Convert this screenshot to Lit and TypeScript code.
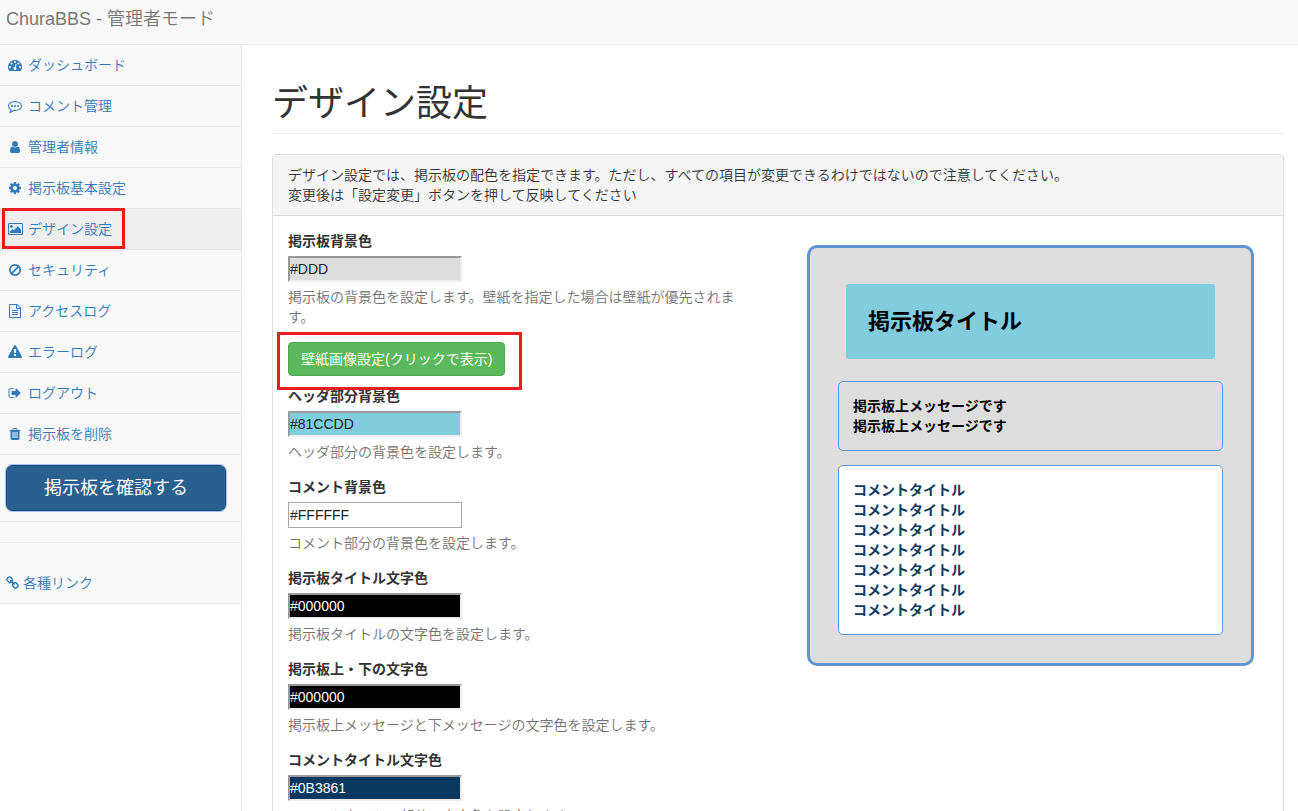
import { LitElement, html, css, svg } from "lit";
import { customElement, property, state } from "lit/decorators.js";
import { classMap } from "lit/directives/class-map.js";
import { styleMap } from "lit/directives/style-map.js";

const ICONS: Record<string, { box: string; path: string }> = {
  dashboard: {
    box: "0 0 1792 1792",
    path: "M384 1152q0-53-37.5-90.5t-90.5-37.5-90.5 37.5-37.5 90.5 37.5 90.5 90.5 37.5 90.5-37.5 37.5-90.5zm192-448q0-53-37.5-90.5t-90.5-37.5-90.5 37.5-37.5 90.5 37.5 90.5 90.5 37.5 90.5-37.5 37.5-90.5zm428 481l101-382q6-26-7.5-48.5t-38.5-29.5-48 6.5-30 39.5l-101 382q-60 5-107 43.5t-63 98.5q-20 77 20 146t117 89 146-20 89-117q16-60-6-117t-72-91zm660-33q0-53-37.5-90.5t-90.5-37.5-90.5 37.5-37.5 90.5 37.5 90.5 90.5 37.5 90.5-37.5 37.5-90.5zm-640-640q0-53-37.5-90.5t-90.5-37.5-90.5 37.5-37.5 90.5 37.5 90.5 90.5 37.5 90.5-37.5 37.5-90.5zm448 192q0-53-37.5-90.5t-90.5-37.5-90.5 37.5-37.5 90.5 37.5 90.5 90.5 37.5 90.5-37.5 37.5-90.5zm320 448q0 261-141 483-19 29-54 29h-1402q-35 0-54-29-141-221-141-483 0-182 71-348t191-286 286-191 348-71 348 71 286 191 191 286 71 348z",
  },
  comment: {
    box: "0 0 1792 1792",
    path: "M640 896q0 53-37.5 90.5t-90.5 37.5-90.5-37.5-37.5-90.5 37.5-90.5 90.5-37.5 90.5 37.5 37.5 90.5zm384 0q0 53-37.5 90.5t-90.5 37.5-90.5-37.5-37.5-90.5 37.5-90.5 90.5-37.5 90.5 37.5 37.5 90.5zm384 0q0 53-37.5 90.5t-90.5 37.5-90.5-37.5-37.5-90.5 37.5-90.5 90.5-37.5 90.5 37.5 37.5 90.5zm-512-512q-204 0-381.5 69.5t-282 187.5-104.5 255q0 112 71.5 213.5t201.5 175.5l87 50-27 96q-24 91-70 172 152-63 275-171l43-38 57 6q69 8 130 8 204 0 381.5-69.5t282-187.5 104.5-255-104.5-255-282-187.5-381.5-69.5zm896 512q0 174-120 321.5t-326 233-450 85.5q-70 0-145-8-198 175-460 242-49 14-114 22h-5q-15 0-27-10.5t-16-27.5v-1q-3-4-.5-12t2-10 4.5-9.5l6-9 7-8.5 8-9q7-8 31-34.5t34.5-38 31-39.5 32.5-51 27-59 26-76q-157-89-247.5-220t-90.5-281q0-174 120-321.5t326-233 450-85.5 450 85.5 326 233 120 321.5z",
  },
  user: {
    box: "0 0 1792 1792",
    path: "M1536 1399q0 109-62.5 187t-150.5 78h-854q-88 0-150.5-78t-62.5-187q0-85 8.5-160.5t31.5-152 58.5-131 94-89 134.5-34.5q131 128 313 128t313-128q76 0 134.5 34.5t94 89 58.5 131 31.5 152 8.5 160.5zm-256-887q0 159-112.5 271.5t-271.5 112.5-271.5-112.5-112.5-271.5 112.5-271.5 271.5-112.5 271.5 112.5 112.5 271.5z",
  },
  cog: {
    box: "0 0 1792 1792",
    path: "M1152 896q0-106-75-181t-181-75-181 75-75 181 75 181 181 75 181-75 75-181zm512-109v222q0 12-8 23t-20 13l-185 28q-19 54-39 91 35 50 107 138 10 12 10 25t-9 23q-27 37-99 108t-94 71q-12 0-26-9l-138-108q-44 23-91 38-16 136-29 186-7 28-36 28h-222q-14 0-24.5-8.5t-11.5-21.5l-28-184q-49-16-90-37l-141 107q-10 9-25 9-14 0-25-11-126-114-165-168-7-10-7-23 0-12 8-23 15-21 51-66.5t54-70.5q-27-50-41-99l-183-27q-13-2-21-12.5t-8-23.5v-222q0-12 8-23t19-13l186-28q14-46 39-92-40-57-107-138-10-12-10-24 0-10 9-23 26-36 98.5-107.5t94.5-71.5q13 0 26 10l138 107q44-23 91-38 16-136 29-186 7-28 36-28h222q14 0 24.5 8.5t11.5 21.5l28 184q49 16 90 37l142-107q9-9 24-9 13 0 25 10 129 119 165 170 7 8 7 22 0 12-8 23-15 21-51 66.5t-54 70.5q26 50 41 98l183 28q13 2 21 12.5t8 23.5z",
  },
  picture: {
    box: "0 0 1920 1792",
    path: "M640 576q0 80-56 136t-136 56-136-56-56-136 56-136 136-56 136 56 56 136zm1024 384v448h-1408v-192l320-320 160 160 512-512zm96-704h-1600q-13 0-22.5 9.5t-9.5 22.5v1216q0 13 9.5 22.5t22.5 9.5h1600q13 0 22.5-9.5t9.5-22.5v-1216q0-13-9.5-22.5t-22.5-9.5zm160 32v1216q0 66-47 113t-113 47h-1600q-66 0-113-47t-47-113v-1216q0-66 47-113t113-47h1600q66 0 113 47t47 113z",
  },
  ban: {
    box: "0 0 1792 1792",
    path: "M1440 893q0-161-87-295l-754 753q137 89 297 89 111 0 211.5-43.5t173.5-116.5 116-174.5 43-212.5zm-999 299l755-754q-135-91-300-91-148 0-273 73t-198 199-73 274q0 162 89 299zm1223-299q0 157-61 300t-163.5 246-245 164-298.5 61-298.5-61-245-164-163.5-246-61-300 61-299.5 163.5-245.5 245-164 298.5-61 298.5 61 245 164 163.5 245.5 61 299.5z",
  },
  file: {
    box: "0 0 1792 1792",
    path: "M1596 380q28 28 48 76t20 88v1152q0 40-28 68t-68 28h-1344q-40 0-68-28t-28-68v-1600q0-40 28-68t68-28h896q40 0 88 20t76 48zm-444-244v376h376q-10-29-22-41l-313-313q-12-12-41-22zm384 1528v-1024h-416q-40 0-68-28t-28-68v-416h-768v1536h1280zm-1024-864q0-14 9-23t23-9h704q14 0 23 9t9 23v64q0 14-9 23t-23 9h-704q-14 0-23-9t-9-23v-64zm736 224q14 0 23 9t9 23v64q0 14-9 23t-23 9h-704q-14 0-23-9t-9-23v-64q0-14 9-23t23-9h704zm0 256q14 0 23 9t9 23v64q0 14-9 23t-23 9h-704q-14 0-23-9t-9-23v-64q0-14 9-23t23-9h704z",
  },
  warning: {
    box: "0 0 1792 1792",
    path: "M1024 1375v-190q0-14-9.5-23.5t-22.5-9.5h-192q-13 0-22.5 9.5t-9.5 23.5v190q0 14 9.5 23.5t22.5 9.5h192q13 0 22.5-9.5t9.5-23.5zm-2-374l18-459q0-12-10-19-13-11-24-11h-220q-11 0-24 11-10 7-10 21l17 457q0 10 10 16.5t24 6.5h185q14 0 23.5-6.5t10.5-16.5zm-14-934l768 1408q35 63-2 126-17 29-46.5 46t-63.5 17h-1536q-34 0-63.5-17t-46.5-46q-37-63-2-126l768-1408q17-31 47-49t65-18 65 18 47 49z",
  },
  signout: {
    box: "0 0 1792 1792",
    path: "M704 1440q0 4 1 20t.5 26.5-3 23.5-10 19.5-20.5 6.5h-320q-119 0-203.5-84.5t-84.5-203.5v-704q0-119 84.5-203.5t203.5-84.5h320q13 0 22.5 9.5t9.5 22.5q0 4 1 20t.5 26.5-3 23.5-10 19.5-20.5 6.5h-320q-66 0-113 47t-47 113v704q0 66 47 113t113 47h312l11.5 1 11.5 3 8 5.5 7 9 2 13.5zm928-544q0 26-19 45l-544 544q-19 19-45 19t-45-19-19-45v-288h-448q-26 0-45-19t-19-45v-384q0-26 19-45t45-19h448v-288q0-26 19-45t45-19 45 19l544 544q19 19 19 45z",
  },
  trash: {
    box: "0 0 1792 1792",
    path: "M704 1376v-704q0-14-9-23t-23-9h-64q-14 0-23 9t-9 23v704q0 14 9 23t23 9h64q14 0 23-9t9-23zm256 0v-704q0-14-9-23t-23-9h-64q-14 0-23 9t-9 23v704q0 14 9 23t23 9h64q14 0 23-9t9-23zm256 0v-704q0-14-9-23t-23-9h-64q-14 0-23 9t-9 23v704q0 14 9 23t23 9h64q14 0 23-9t9-23zm-544-992h448l-48-117q-7-9-17-11h-317q-10 2-17 11zm928 32v64q0 14-9 23t-23 9h-96v948q0 83-47 143.5t-113 60.5h-832q-66 0-113-58.5t-47-141.5v-952h-96q-14 0-23-9t-9-23v-64q0-14 9-23t23-9h309l70-167q15-37 54-63t79-26h320q40 0 79 26t54 63l70 167h309q14 0 23 9t9 23z",
  },
  link: {
    box: "64 0 1664 1792",
    path: "M1520 1216q0-40-28-68l-208-208q-28-28-68-28-42 0-72 32 3 3 19 18.5t21.5 21.5 15 19 13 25.5 3.5 27.5q0 40-28 68t-68 28q-15 0-27.5-3.5t-25.5-13-19-15-21.5-21.5-18.5-19q-33 31-33 73 0 40 28 68l206 207q27 27 68 27 40 0 68-26l147-146q28-28 28-67zm-703-705q0-40-28-68l-206-207q-28-28-68-28-39 0-68 27l-147 146q-28 28-28 67 0 40 28 68l208 208q27 27 68 27 42 0 72-31-3-3-19-18.5t-21.5-21.5-15-19-13-25.5-3.5-27.5q0-40 28-68t68-28q15 0 27.5 3.5t25.5 13 19 15 21.5 21.5 18.5 19q33-31 33-73zm895 705q0 120-85 203l-147 146q-83 83-203 83-121 0-204-85l-206-207q-83-83-83-203 0-123 88-209l-88-88q-86 88-208 88-120 0-204-84l-208-208q-84-84-84-204t85-203l147-146q83-83 203-83 121 0 204 85l206 207q83 83 83 203 0 123-88 209l88 88q86-88 208-88 120 0 204 84l208 208q84 84 84 204z",
  },
};

@customElement("menu-icon")
class MenuIcon extends LitElement {
  @property() name = "";

  static styles = css`
    :host {
      display: flex;
      justify-content: center;
    }
    .glyph {
      display: block;
      height: 14px;
      fill: currentColor;
    }
  `;

  render() {
    const icon = ICONS[this.name];
    if (!icon) return null;
    return html`<svg class="glyph" viewBox=${icon.box} aria-hidden="true">
      ${svg`<path d=${icon.path}></path>`}
    </svg>`;
  }
}

interface MenuItem {
  icon: string;
  label: string;
  active?: boolean;
}

const MENU: MenuItem[] = [
  { icon: "dashboard", label: "ダッシュボード" },
  { icon: "comment", label: "コメント管理" },
  { icon: "user", label: "管理者情報" },
  { icon: "cog", label: "掲示板基本設定" },
  { icon: "picture", label: "デザイン設定", active: true },
  { icon: "ban", label: "セキュリティ" },
  { icon: "file", label: "アクセスログ" },
  { icon: "warning", label: "エラーログ" },
  { icon: "signout", label: "ログアウト" },
  { icon: "trash", label: "掲示板を削除" },
];

@customElement("side-menu")
class SideMenu extends LitElement {
  static styles = css`
    :host {
      display: block;
      background: #f8f8f8;
    }
    .list {
      margin: 0;
      padding: 0;
      list-style: none;
    }
    .item {
      position: relative;
      border-bottom: 1px solid #e7e7e7;
    }
    .link {
      display: flex;
      align-items: center;
      gap: 4px;
      padding: 10px 6px;
      color: #337ab7;
      text-decoration: none;
    }
    .icon {
      width: 18px;
    }
    .active {
      background: #eee;
    }
    .callout {
      position: absolute;
      top: -1px;
      bottom: 0;
      left: 2px;
      width: 123px;
      box-sizing: border-box;
      border: 3px solid #ed1c24;
      pointer-events: none;
    }
    .action {
      padding: 10px 15px 10px 6px;
    }
    .confirm {
      display: block;
      width: 100%;
      padding: 10px 16px;
      border: 1px solid #204d74;
      border-radius: 6px;
      outline: 1px solid #a3c4fb;
      background: #286090;
      color: #fff;
      font: inherit;
      font-size: 18px;
      font-weight: 400;
      line-height: 24px;
    }
    .rule {
      margin: 20px 0;
      border: 0;
      border-top: 1px solid #eee;
    }
  `;

  render() {
    return html`<nav>
      <ul class="list">
        ${MENU.map(
          (item) => html`<li class=${classMap({ item: true, active: !!item.active })}>
            <a class="link" href="#"><menu-icon class="icon" name=${item.icon}></menu-icon>${item.label}</a>
            ${item.active ? html`<span class="callout"></span>` : null}
          </li>`
        )}
        <li class="item action"><button class="confirm" type="button">掲示板を確認する</button></li>
        <li class="item">
          <hr class="rule" />
          <a class="link" href="#"><menu-icon name="link"></menu-icon>各種リンク</a>
        </li>
      </ul>
    </nav>`;
  }
}

interface ColorField {
  key: string;
  label: string;
  help: string;
}

const FIELDS: ColorField[] = [
  { key: "page", label: "掲示板背景色", help: "掲示板の背景色を設定します。壁紙を指定した場合は壁紙が優先されます。" },
  { key: "header", label: "ヘッダ部分背景色", help: "ヘッダ部分の背景色を設定します。" },
  { key: "comment", label: "コメント背景色", help: "コメント部分の背景色を設定します。" },
  { key: "title", label: "掲示板タイトル文字色", help: "掲示板タイトルの文字色を設定します。" },
  { key: "message", label: "掲示板上・下の文字色", help: "掲示板上メッセージと下メッセージの文字色を設定します。" },
  { key: "commentTitle", label: "コメントタイトル文字色", help: "コメントタイトル部分の文字色を設定します。" },
];

function isDark(color: string): boolean {
  const digits = color.replace("#", "");
  const full = digits.length === 3 ? digits.replace(/./g, "$&$&") : digits;
  const n = parseInt(full, 16);
  return ((n >> 16) & 255) * 0.3 + ((n >> 8) & 255) * 0.6 + (n & 255) * 0.1 < 128;
}

@customElement("app-root")
class AppRoot extends LitElement {
  @state() colors: Record<string, string> = {
    page: "#DDD",
    header: "#81CCDD",
    comment: "#FFFFFF",
    title: "#000000",
    message: "#000000",
    commentTitle: "#0B3861",
  };

  static styles = css`
    :host {
      display: flex;
      flex-direction: column;
      min-height: 100vh;
      background: #fff;
      color: #333;
      font-family: "Liberation Sans", "Noto Sans CJK JP", sans-serif;
      font-size: 14px;
      font-weight: 350;
      line-height: 20px;
    }
    .topbar {
      padding: 9px 6px 15px;
      border-bottom: 1px solid #e7e7e7;
      background: #f8f8f8;
    }
    .brand {
      color: #777;
      font-size: 18px;
      text-decoration: none;
    }
    .topbar,
    .brand {
      display: flex;
    }
    .layout {
      display: flex;
      flex: 1;
    }
    .side {
      flex: 0 0 241px;
      align-self: flex-start;
    }
    .main {
      flex: 1;
      min-width: 0;
      padding: 39px 14px 20px 30px;
      border-left: 1px solid #e7e7e7;
    }
    .heading {
      margin: 0 0 20px;
      padding-bottom: 9px;
      border-bottom: 1px solid #eee;
      font-size: 36px;
      font-weight: 400;
      line-height: 40px;
    }
    .panel {
      border: 1px solid #ddd;
      border-radius: 4px;
    }
    .intro {
      margin: 0;
      padding: 10px 15px;
      border-bottom: 1px solid #ddd;
      border-radius: 3px 3px 0 0;
      background: #f5f5f5;
    }
    .body {
      display: grid;
      grid-template-columns: repeat(2, minmax(0, 1fr));
      gap: 30px;
      padding: 15px;
    }
    .field {
      display: flex;
      flex-direction: column;
      align-items: flex-start;
      gap: 5px;
      margin-bottom: 15px;
    }
    .label {
      font-weight: 700;
    }
    .input {
      box-sizing: border-box;
      width: 174px;
      height: 26px;
      padding: 0;
      border: 2px solid;
      border-color: #9a9a9a #eee #eee #9a9a9a;
      border-radius: 0;
      color: #222;
      font: inherit;
    }
    .plain {
      padding: 1px;
      border: 1px solid #a9a9a9;
    }
    .inverse {
      color: #fff;
    }
    .help {
      margin: 0;
      padding-right: 15px;
      color: #737373;
    }
    .wallpaper {
      position: relative;
      display: flex;
      width: fit-content;
      margin-bottom: 10px;
    }
    .wallpaper-button {
      padding: 6px 12px;
      border: 1px solid #4cae4c;
      border-radius: 4px;
      background: #5cb85c;
      color: #fff;
      font: inherit;
      font-weight: 400;
    }
    .callout {
      position: absolute;
      inset: -10px -17px -14px -11px;
      border: 3px solid #ed1c24;
      pointer-events: none;
    }
    .preview {
      display: flex;
      flex-direction: column;
      align-self: start;
      gap: 14px;
      margin: 14px;
      padding: 28px;
      border: 3px solid #6093d3;
      border-radius: 10px;
      font-weight: 700;
    }
    .preview-title {
      margin: 8px;
      padding: 22px;
      border-radius: 3px;
      font-size: 22px;
      line-height: 31px;
    }
    .preview-box {
      padding: 14px;
      border: 1px solid #6093d3;
      border-radius: 5px;
    }
  `;

  private setColor(key: string, e: Event) {
    this.colors = { ...this.colors, [key]: (e.target as HTMLInputElement).value };
  }

  private renderField(field: ColorField) {
    const value = this.colors[field.key];
    const classes = { input: true, plain: value.toUpperCase() === "#FFFFFF", inverse: isDark(value) };
    return html`<div class="field">
        <label class="label" for=${field.key}>${field.label}</label>
        <input
          id=${field.key}
          class=${classMap(classes)}
          style=${styleMap({ backgroundColor: value })}
          type="text"
          .value=${value}
          @input=${(e: Event) => this.setColor(field.key, e)}
        />
        <p class="help">${field.help}</p>
      </div>
      ${field.key === "page"
        ? html`<div class="wallpaper">
            <button class="wallpaper-button" type="button">壁紙画像設定(クリックで表示)</button>
            <span class="callout"></span>
          </div>`
        : null}`;
  }

  render() {
    const c = this.colors;
    return html`
      <header class="topbar"><a class="brand" href="#">ChuraBBS - 管理者モード</a></header>
      <div class="layout">
        <side-menu class="side"></side-menu>
        <main class="main">
          <h1 class="heading">デザイン設定</h1>
          <section class="panel">
            <p class="intro">
              デザイン設定では、掲示板の配色を指定できます。ただし、すべての項目が変更できるわけではないので注意してください。<br />変更後は「設定変更」ボタンを押して反映してください
            </p>
            <div class="body">
              <form>${FIELDS.map((field) => this.renderField(field))}</form>
              <div class="preview" style=${styleMap({ backgroundColor: c.page })}>
                <div class="preview-title" style=${styleMap({ backgroundColor: c.header, color: c.title })}>
                  掲示板タイトル
                </div>
                <div class="preview-box" style=${styleMap({ color: c.message })}>
                  ${Array.from({ length: 2 }, () => html`<div>掲示板上メッセージです</div>`)}
                </div>
                <div class="preview-box" style=${styleMap({ backgroundColor: c.comment, color: c.commentTitle })}>
                  ${Array.from({ length: 7 }, () => html`<div>コメントタイトル</div>`)}
                </div>
              </div>
            </div>
          </section>
        </main>
      </div>
    `;
  }
}
